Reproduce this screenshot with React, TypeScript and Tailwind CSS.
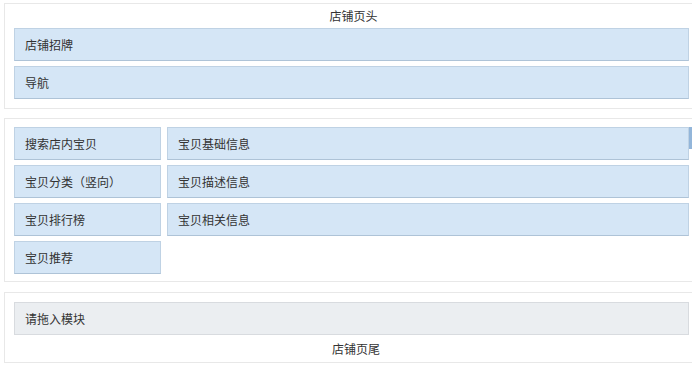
import React from "react";

const font = { fontFamily: '"Noto Sans CJK SC", "Noto Sans", sans-serif' };

function BlueBar({ label, className = "" }: { label: string; className?: string }) {
  return (
    <div
      className={`h-[33px] flex items-center pl-[10px] bg-[#d5e6f6] border border-[#bfd2e4] border-b-[#aec3d7] text-[12px] text-[#333] ${className}`}
    >
      {label}
    </div>
  );
}

export default function App() {
  return (
    <div className="w-[692px] h-[367px] overflow-hidden bg-white" style={font}>
      <div className="w-[704px] ml-[4px] pt-[3px] flex flex-col">
        {/* Header section */}
        <div className="border border-[#e8e8e8] pr-[18px] pl-[9px] pb-[9px]">
          <div className="h-[24px] flex items-center justify-center text-[12px] text-[#333] pl-[4px]">店铺页头</div>
          <div className="flex flex-col gap-[5px]">
            <BlueBar label="店铺招牌" />
            <BlueBar label="导航" />
          </div>
        </div>

        {/* Body section */}
        <div className="relative mt-[9px] border border-[#e8e8e8] pr-[18px] pl-[9px] pt-[8px] pb-[7px] flex gap-[6px]">
          <div className="w-[147px] flex flex-col gap-[5px]">
            <BlueBar label="搜索店内宝贝" />
            <BlueBar label="宝贝分类（竖向）" />
            <BlueBar label="宝贝排行榜" />
            <BlueBar label="宝贝推荐" />
          </div>
          <div className="flex-1 flex flex-col gap-[5px]">
            <BlueBar label="宝贝基础信息" />
            <BlueBar label="宝贝描述信息" />
            <BlueBar label="宝贝相关信息" />
          </div>
          <div className="absolute left-[684px] top-[8px] w-[4px] h-[22px] bg-[#93b6da]" />
        </div>

        {/* Footer section */}
        <div className="mt-[10px] border border-[#e8e8e8] pr-[18px] pl-[9px] pt-[9px]">
          <div className="h-[33px] flex items-center pl-[10px] bg-[#ebeef1] border border-[#d8dbdf] text-[12px] text-[#333]">
            请拖入模块
          </div>
          <div className="h-[27px] flex items-center justify-center text-[12px] text-[#333] pl-[9px]">店铺页尾</div>
        </div>
      </div>
    </div>
  );
}
